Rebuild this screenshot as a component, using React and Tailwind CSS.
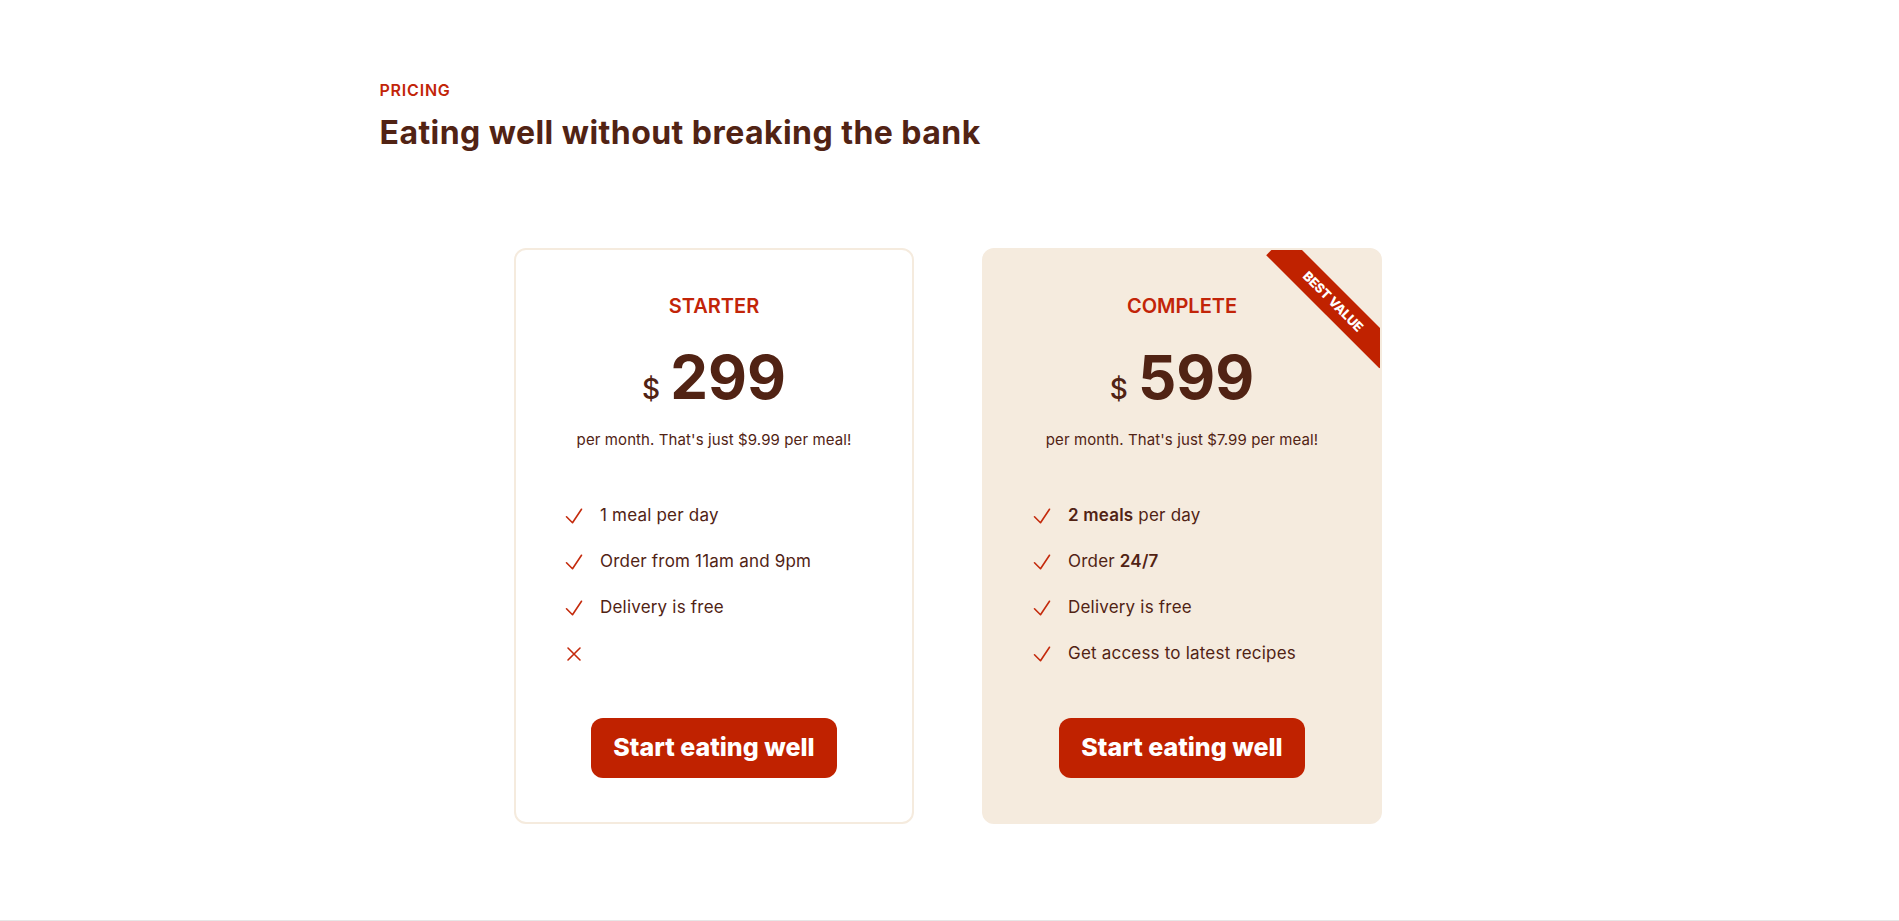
import React from "react";

// Pricing plans
const plans = [
  {
    id: "starter",
    name: "Starter",
    price: 299,
    perMeal: "$9.99",
    featured: false,
    features: [
      { ok: true, text: <>1 meal per day</> },
      { ok: true, text: <>Order from 11am and 9pm</> },
      { ok: true, text: <>Delivery is free</> },
      { ok: false, text: null },
    ],
  },
  {
    id: "complete",
    name: "Complete",
    price: 599,
    perMeal: "$7.99",
    featured: true,
    features: [
      { ok: true, text: <><strong className="font-semibold">2 meals</strong> per day</> },
      { ok: true, text: <>Order <strong className="font-semibold">24/7</strong></> },
      { ok: true, text: <>Delivery is free</> },
      { ok: true, text: <>Get access to latest recipes</> },
    ],
  },
];

const CheckIcon = () => (
  <svg viewBox="0 0 24 24" fill="none" stroke="currentColor" strokeWidth="1.6" className="w-6 h-6 shrink-0 text-[#c42a0c]">
    <path strokeLinecap="round" strokeLinejoin="round" d="M4.5 12.75l6 6 9-13.5" />
  </svg>
);

const CrossIcon = () => (
  <svg viewBox="0 0 24 24" fill="none" stroke="currentColor" strokeWidth="1.6" className="w-6 h-6 shrink-0 text-[#c42a0c]">
    <path strokeLinecap="round" strokeLinejoin="round" d="M6 18L18 6M6 6l12 12" />
  </svg>
);

const PlanCard = ({ plan }) => (
  <div
    className={
      plan.featured
        ? "relative overflow-hidden w-[400px] rounded-xl border-2 border-[#f5ebde] bg-[#f5ebde] px-[46px] pt-[44px] pb-[44px]"
        : "relative overflow-hidden w-[400px] rounded-xl border-2 border-[#f5ebde] bg-white px-[46px] pt-[44px] pb-[44px]"
    }
  >
    {plan.featured && (
      <div className="absolute top-[37px] right-[-33px] w-[160px] h-[29px] rotate-45 bg-[#c02200] flex items-center justify-center text-white text-[13px] font-extrabold uppercase tracking-[-0.2px]">
        Best value
      </div>
    )}

    <p className="text-center text-[20px] leading-[24px] font-semibold uppercase text-[#c22408]">
      {plan.name}
    </p>

    <div className="mt-[29px] flex items-baseline justify-center gap-[10px] text-[#512314]">
      <span className="text-[28px] font-medium">$</span>
      <span className="text-[60px] leading-none font-bold">{plan.price}</span>
    </div>

    <p className="mt-[20px] text-center text-[15px] leading-[20px] tracking-[0.1px] text-[#512314]">
      per month. That's just {plan.perMeal} per meal!
    </p>

    <ul className="mt-[54px] flex flex-col gap-[22px]">
      {plan.features.map((f, i) => (
        <li key={i} className="flex items-center gap-[14px] h-6 text-[17px] tracking-[0.2px] text-[#512314]">
          {f.ok ? <CheckIcon /> : <CrossIcon />}
          {f.text && <span>{f.text}</span>}
        </li>
      ))}
    </ul>

    <div className="mt-[52px] flex justify-center">
      <button className="h-[60px] w-[246px] rounded-xl bg-[#c02200] text-white text-[25px] font-extrabold">
        Start eating well
      </button>
    </div>
  </div>
);

export default function App() {
  return (
    <div className="min-h-screen bg-white font-['Inter',_'Liberation_Sans',_sans-serif]">
      <section className="pt-[80px] pb-[96px]">
        <div className="mx-auto w-[1140px]">
          <span className="block text-[16px] leading-[20px] font-semibold tracking-wider uppercase text-[#c22408]">
            Pricing
          </span>
          <h2 className="mt-[14px] text-[32px] leading-[38px] font-bold tracking-[0.45px] text-[#512314]">
            Eating well without breaking the bank
          </h2>

          <div className="mt-[96px] flex justify-center gap-[68px] pr-[3px]">
            {plans.map((plan) => (
              <PlanCard key={plan.id} plan={plan} />
            ))}
          </div>
        </div>
      </section>
      <div className="border-t border-[#e6e6e6] h-10" />
    </div>
  );
}
